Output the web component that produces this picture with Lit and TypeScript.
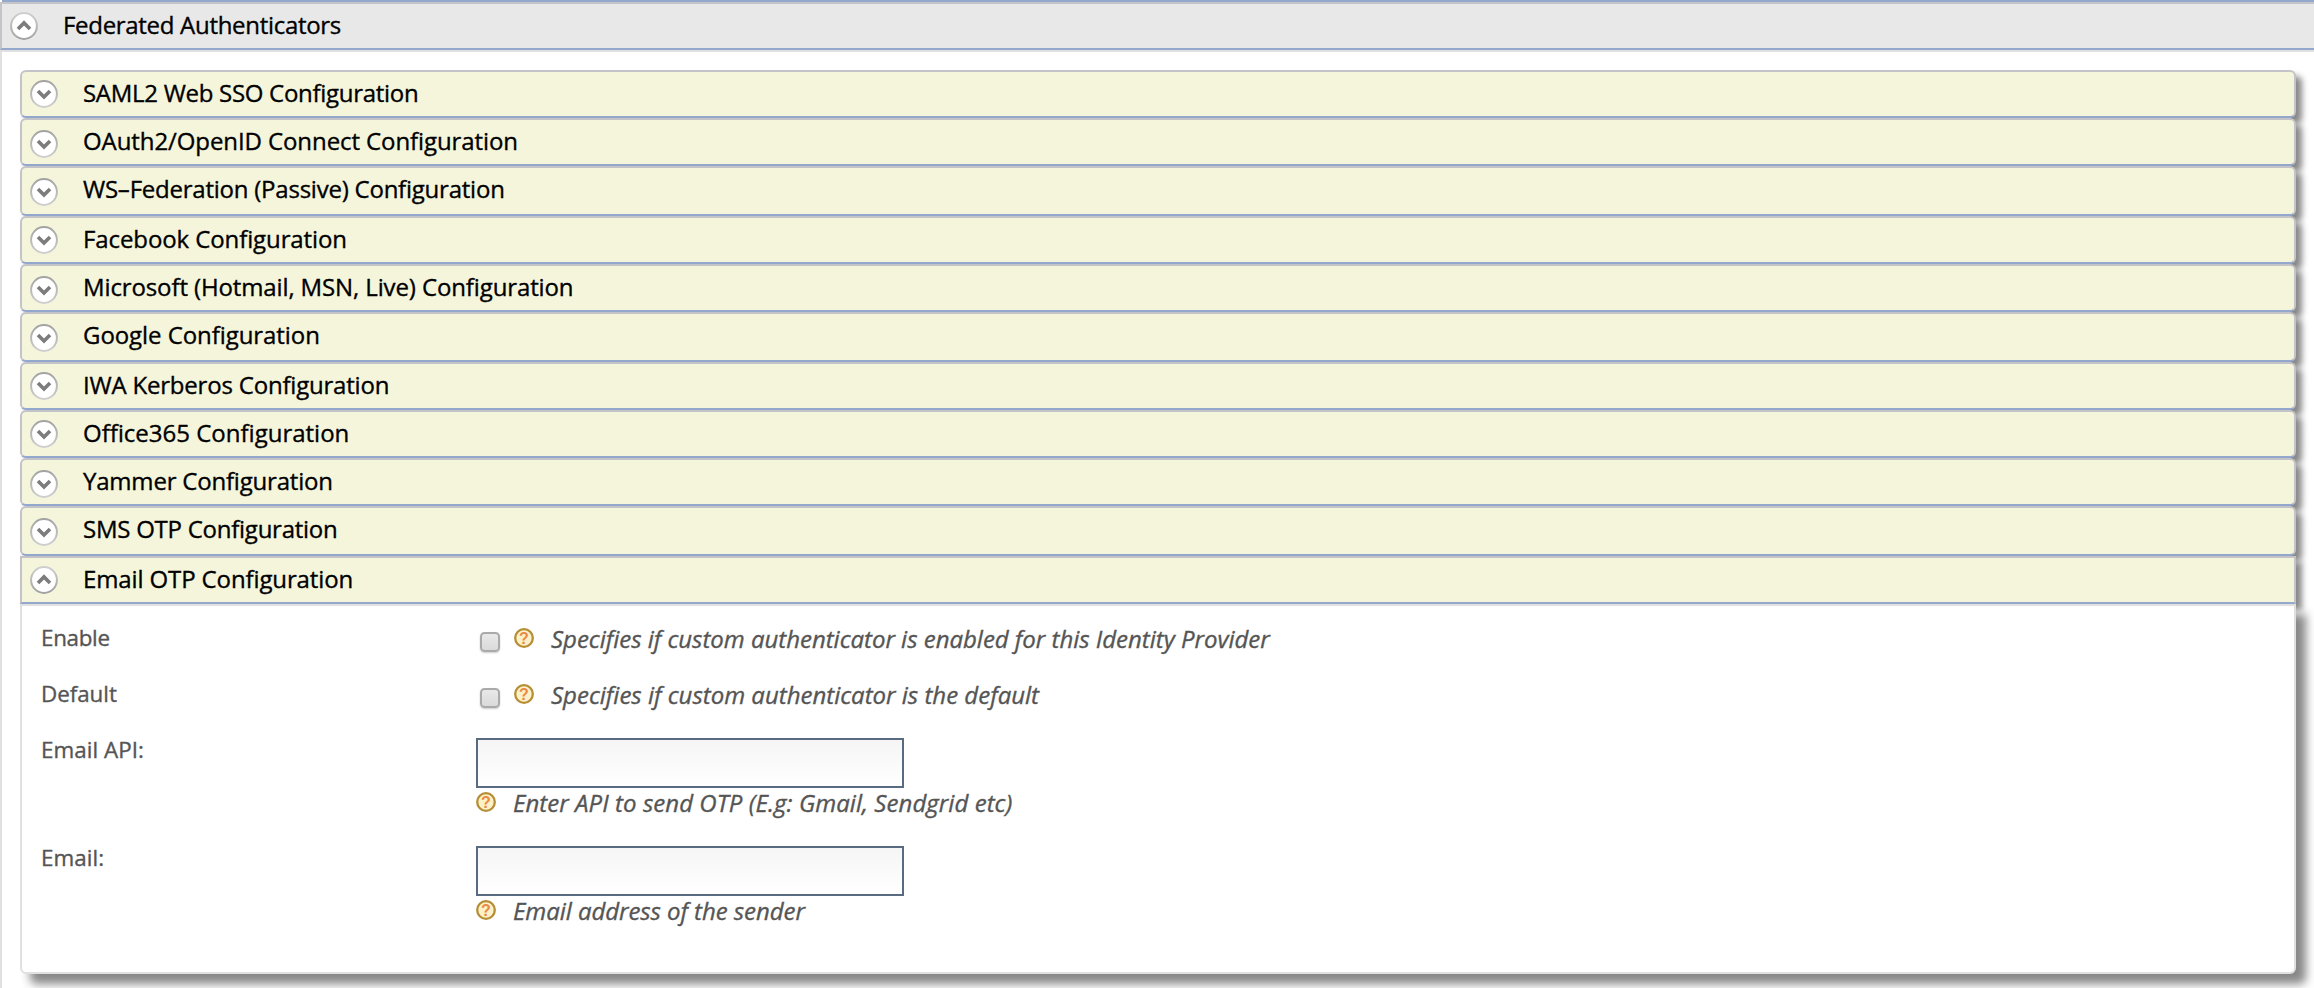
import { LitElement, html, css, svg, nothing } from 'lit';
import { customElement, property } from 'lit/decorators.js';
import { classMap } from 'lit/directives/class-map.js';

interface Section { title: string; spacing: number; low?: boolean; open?: boolean; tall?: boolean; }

const SECTIONS: Section[] = [
  { title: 'SAML2 Web SSO Configuration', spacing: -0.29 },
  { title: 'OAuth2/OpenID Connect Configuration', spacing: -0.09, low: true },
  { title: 'WS–Federation (Passive) Configuration', spacing: -0.23, low: true, tall: true },
  { title: 'Facebook Configuration', spacing: -0.1 },
  { title: 'Microsoft (Hotmail, MSN, Live) Configuration', spacing: -0.12, low: true },
  { title: 'Google Configuration', spacing: -0.07, low: true, tall: true },
  { title: 'IWA Kerberos Configuration', spacing: -0.2 },
  { title: 'Office365 Configuration', spacing: 0 },
  { title: 'Yammer Configuration', spacing: -0.2, low: true },
  { title: 'SMS OTP Configuration', spacing: -0.25, low: true, tall: true },
  { title: 'Email OTP Configuration', spacing: -0.12, open: true },
];

interface Field { label: string; labelSpacing: number; hint: string; hintSpacing: number; kind: 'check' | 'text'; }

const FIELDS: Field[] = [
  { label: 'Enable', labelSpacing: -0.3, hint: 'Specifies if custom authenticator is enabled for this Identity Provider', hintSpacing: -0.02, kind: 'check' },
  { label: 'Default', labelSpacing: -0.05, hint: 'Specifies if custom authenticator is the default', hintSpacing: 0, kind: 'check' },
  { label: 'Email API:', labelSpacing: 0.05, hint: 'Enter API to send OTP (E.g: Gmail, Sendgrid etc)', hintSpacing: 0.05, kind: 'text' },
  { label: 'Email:', labelSpacing: 0.05, hint: 'Email address of the sender', hintSpacing: -0.06, kind: 'text' },
];

@customElement('toggle-icon')
class ToggleIcon extends LitElement {
  @property({ type: Boolean }) open = false;
  static styles = css`
    :host { display: block; width: 28px; height: 28px; flex: none; }
    svg { display: block; }
  `;
  render() {
    return html`<svg width="28" height="28" viewBox="0 0 28 28">
      <defs>
        <linearGradient id="ring" x1="0" y1=${this.open ? '1' : '0'} x2="0" y2=${this.open ? '0' : '1'}>
          <stop offset="0" stop-color="#a2a2a2"></stop>
          <stop offset="1" stop-color="#cfcfcf"></stop>
        </linearGradient>
      </defs>
      <circle cx="14" cy="14" r="12.9" fill="#fff" stroke="url(#ring)" stroke-width="2"></circle>
      ${this.open
        ? svg`<path d="M8 16.9L14 10.9L20 16.9" fill="none" stroke="#7c7c7c" stroke-width="3.6"></path>`
        : svg`<path d="M8 11L14 17L20 11" fill="none" stroke="#7c7c7c" stroke-width="3.6"></path>`}
    </svg>`;
  }
}

@customElement('help-icon')
class HelpIcon extends LitElement {
  static styles = css`
    :host { display: block; width: 20px; height: 20px; flex: none; }
    svg { display: block; }
    .mark { font: bold 16px "Liberation Sans", sans-serif; fill: #e98a45; }
  `;
  render() {
    return html`<svg width="20" height="20" viewBox="0 0 20 20">
      <circle cx="10" cy="10" r="8.8" fill="#fdf1c8" stroke="#b68e36" stroke-width="2.3"></circle>
      <text class="mark" x="10" y="15.7" text-anchor="middle">?</text>
    </svg>`;
  }
}

@customElement('app-root')
class AppRoot extends LitElement {
  static styles = css`
    :host {
      display: block; height: 988px; overflow: hidden; background: #fff; color: #000;
      font: 24px/42px "Open Sans", "Noto Sans", sans-serif;
      -webkit-text-stroke: 0.35px currentColor;
    }
    * { box-sizing: border-box; }
    .edge { height: 2px; margin-left: 2px; background: #94a7cd; }
    .header {
      display: flex; align-items: flex-start; gap: 25px; height: 48px; padding-left: 8px;
      background: #e8e8e8; border: solid #c4c5c9; border-width: 2px 0 2px 2px; border-bottom-color: #94a7cd;
    }
    .header toggle-icon { margin-top: 8px; }
    .content { height: 938px; padding: 18px 18px 0 18px; border: solid #e0e0e0; border-width: 2px 0 0 2px; }
    .row {
      display: flex; align-items: flex-start; gap: 25px; height: 48px; padding-left: 8px;
      background: #f5f5dc; border: 2px solid #c4c4c8; border-bottom-color: #94a7cd;
      border-radius: 6px; box-shadow: 6px 6px 6px #888; white-space: nowrap;
    }
    .row.tall { height: 50px; }
    .row.open { border-radius: 0; }
    .row toggle-icon { margin-top: 8px; }
    .row.low toggle-icon { margin-top: 10px; }
    .panel {
      height: 370px; padding: 10px 18px 28px 19px; background: #fff; border: 2px solid #e0e0e0;
      border-radius: 0 0 6px 6px; box-shadow: 10px 10px 10px #888; color: #555;
    }
    .field { display: grid; grid-template-columns: 435px 1fr; height: 56px; white-space: nowrap; }
    .field.text { height: 108px; }
    .label { padding-top: 7px; font-size: 22.4px; line-height: 30px; }
    .control { padding-top: 8px; }
    .text .control { padding-top: 10px; }
    .help { display: flex; align-items: flex-start; gap: 17px; font-style: italic; line-height: 30px; }
    .help help-icon { margin-top: 4px; }
    .check {
      appearance: none; flex: none; width: 20px; height: 20px; margin: 8px -3px 0 4px;
      border: 2px solid #aaa; border-radius: 4.5px; background: linear-gradient(#e9e9e9, #dadada);
      box-shadow: 0 1px 2px rgba(0, 0, 0, .2);
    }
    .input {
      display: block; width: 428px; height: 50px; margin: 0; border: 2px solid #596b80; border-radius: 0;
      background: linear-gradient(#f5f5f5, #fff); outline: none; font: inherit;
    }
  `;

  private section(s: Section) {
    return html`<div class=${classMap({ row: true, low: !!s.low, tall: !!s.tall, open: !!s.open })}>
      <toggle-icon ?open=${!!s.open}></toggle-icon>
      <span style="letter-spacing:${s.spacing}px">${s.title}</span>
    </div>`;
  }

  private field(f: Field) {
    return html`<div class=${classMap({ field: true, text: f.kind === 'text' })}>
      <div class="label" style="letter-spacing:${f.labelSpacing}px">${f.label}</div>
      <div class="control">
        ${f.kind === 'text' ? html`<input class="input" type="text">` : nothing}
        <div class="help">
          ${f.kind === 'check' ? html`<input class="check" type="checkbox">` : nothing}
          <help-icon></help-icon>
          <span style="letter-spacing:${f.hintSpacing}px">${f.hint}</span>
        </div>
      </div>
    </div>`;
  }

  render() {
    return html`
      <div class="edge"></div>
      <div class="header">
        <toggle-icon open></toggle-icon>
        <span style="letter-spacing:-0.3px">Federated Authenticators</span>
      </div>
      <div class="content">
        ${SECTIONS.map((s) => this.section(s))}
        <div class="panel">${FIELDS.map((f) => this.field(f))}</div>
      </div>`;
  }
}
